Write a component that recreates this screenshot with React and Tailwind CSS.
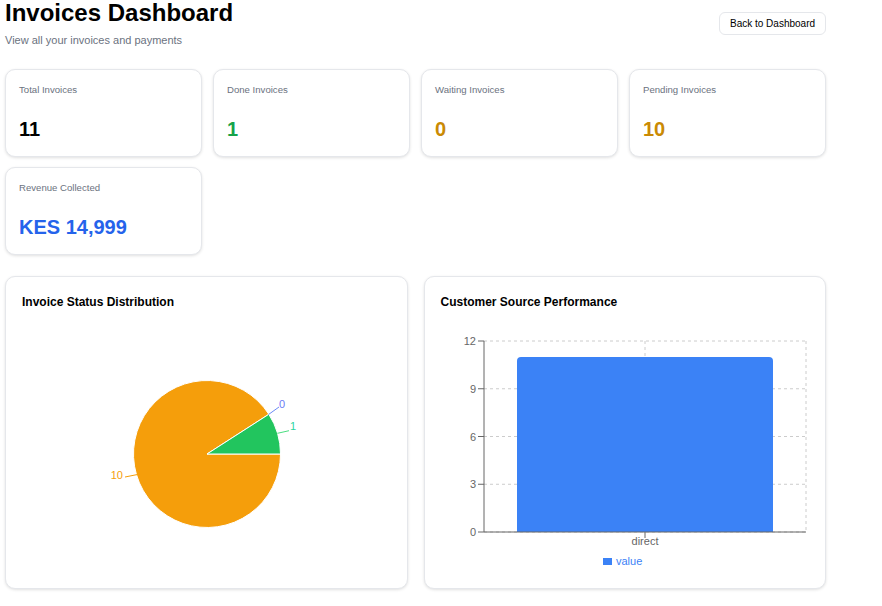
import React from "react";

const stats = [
  { label: "Total Invoices", value: "11", color: "text-black" },
  { label: "Done Invoices", value: "1", color: "text-[#16a34a]" },
  { label: "Waiting Invoices", value: "0", color: "text-[#ca8a04]" },
  { label: "Pending Invoices", value: "10", color: "text-[#ca8a04]" },
  { label: "Revenue Collected", value: "KES 14,999", color: "text-[#2563eb]" },
];

function StatCard({ label, value, color }) {
  return (
    <div className="rounded-[10px] border border-[#e5e7eb] bg-white p-[13px] shadow-[0_1px_3px_rgba(0,0,0,0.12)]">
      <div className="text-[9.6px] leading-[14px] text-[#6b7280]">{label}</div>
      <div className={`mt-[19px] text-[20px] font-bold leading-[27px] ${color}`}>{value}</div>
    </div>
  );
}

function PieChart() {
  const cx = 185;
  const cy = 134;
  const r = 73.5;
  const a = (1 / 11) * Math.PI * 2;
  const gx = cx + r * Math.cos(a);
  const gy = cy - r * Math.sin(a);
  return (
    <svg width="368" height="250" viewBox="0 0 368 250" className="block">
      <path d={`M${cx} ${cy} L${gx} ${gy} A${r} ${r} 0 1 0 ${cx + r} ${cy} Z`} fill="#f59e0b" stroke="#fff" strokeWidth="1" />
      <path d={`M${cx} ${cy} L${cx + r} ${cy} A${r} ${r} 0 0 0 ${gx} ${gy} Z`} fill="#22c55e" stroke="#fff" strokeWidth="1" />
      <line x1="246.5" y1="94.5" x2="257" y2="87" stroke="#6b8af6" />
      <text x="257" y="88" fontSize="11" fill="#6b7cf6" fontFamily="Liberation Sans, Arial, sans-serif">0</text>
      <line x1="255.5" y1="113.3" x2="267" y2="110.7" stroke="#4ade80" />
      <text x="268" y="110" fontSize="11" fill="#2dd4a0" fontFamily="Liberation Sans, Arial, sans-serif">1</text>
      <line x1="115" y1="154.6" x2="103" y2="157" stroke="#f59e0b" />
      <text x="101" y="159" fontSize="11" fill="#f59e0b" textAnchor="end" fontFamily="Liberation Sans, Arial, sans-serif">10</text>
    </svg>
  );
}

function BarChart() {
  const left = 43;
  const right = 365;
  const top = 21;
  const bottom = 212;
  const ticks = [0, 3, 6, 9, 12];
  const yOf = (v) => bottom - (v / 12) * (bottom - top);
  return (
    <svg width="369" height="250" viewBox="0 0 369 250" className="block" fontFamily="Liberation Sans, Arial, sans-serif">
      {ticks.map((t) => (
        <line key={t} x1={left} x2={right} y1={yOf(t)} y2={yOf(t)} stroke="#ccc" strokeDasharray="3 3" />
      ))}
      <line x1="204" x2="204" y1={top} y2={bottom} stroke="#ccc" strokeDasharray="3 3" />
      <line x1={right} x2={right} y1={top} y2={bottom} stroke="#ccc" strokeDasharray="3 3" />
      <path d={`M76 ${yOf(11) + 4} Q76 ${yOf(11)} 80 ${yOf(11)} L328 ${yOf(11)} Q332 ${yOf(11)} 332 ${yOf(11) + 4} L332 ${bottom} L76 ${bottom} Z`} fill="#3b82f6" />
      <line x1={left} x2={left} y1={top} y2={bottom} stroke="#666" />
      <line x1={left} x2={right} y1={bottom} y2={bottom} stroke="#666" />
      {ticks.map((t) => (
        <g key={t}>
          <line x1={left - 6} x2={left} y1={yOf(t)} y2={yOf(t)} stroke="#666" />
          <text x={left - 8} y={yOf(t) + 4} fontSize="11" fill="#666" textAnchor="end">{t}</text>
        </g>
      ))}
      <line x1="204" x2="204" y1={bottom} y2={bottom + 6} stroke="#666" />
      <text x="204" y="225" fontSize="11" fill="#666" textAnchor="middle">direct</text>
      <rect x="162" y="238" width="9" height="7" fill="#3b82f6" />
      <text x="175" y="245" fontSize="11" fill="#3b82f6">value</text>
    </svg>
  );
}

function ChartCard({ title, children }) {
  return (
    <div className="h-[313px] rounded-[10px] border border-[#e5e7eb] bg-white p-4 shadow-[0_1px_3px_rgba(0,0,0,0.12)]">
      <h3 className="text-[12px] font-bold leading-[18px] text-black">{title}</h3>
      <div className="mt-[9px]">{children}</div>
    </div>
  );
}

export default function App() {
  return (
    <div className="min-h-screen bg-white font-['Liberation_Sans',Arial,sans-serif]">
      <div className="w-[831px] px-[5px]">
        <div className="flex items-start justify-between">
          <div>
            <h1 className="text-[24px] font-bold leading-[26px] text-black">Invoices Dashboard</h1>
            <p className="mt-[6px] text-[11px] leading-[16px] text-[#6b7280]">View all your invoices and payments</p>
          </div>
          <button className="mt-[12px] h-[23px] w-[107px] rounded-[6px] border border-[#e5e7eb] bg-white text-[10px] text-black">
            Back to Dashboard
          </button>
        </div>

        <div className="mt-[21px] grid grid-cols-4 gap-x-[11px] gap-y-[10px]">
          {stats.map((s) => (
            <StatCard key={s.label} {...s} />
          ))}
        </div>

        <div className="mt-[21px] grid grid-cols-2 gap-4">
          <ChartCard title="Invoice Status Distribution">
            <PieChart />
          </ChartCard>
          <ChartCard title="Customer Source Performance">
            <BarChart />
          </ChartCard>
        </div>
      </div>
    </div>
  );
}
